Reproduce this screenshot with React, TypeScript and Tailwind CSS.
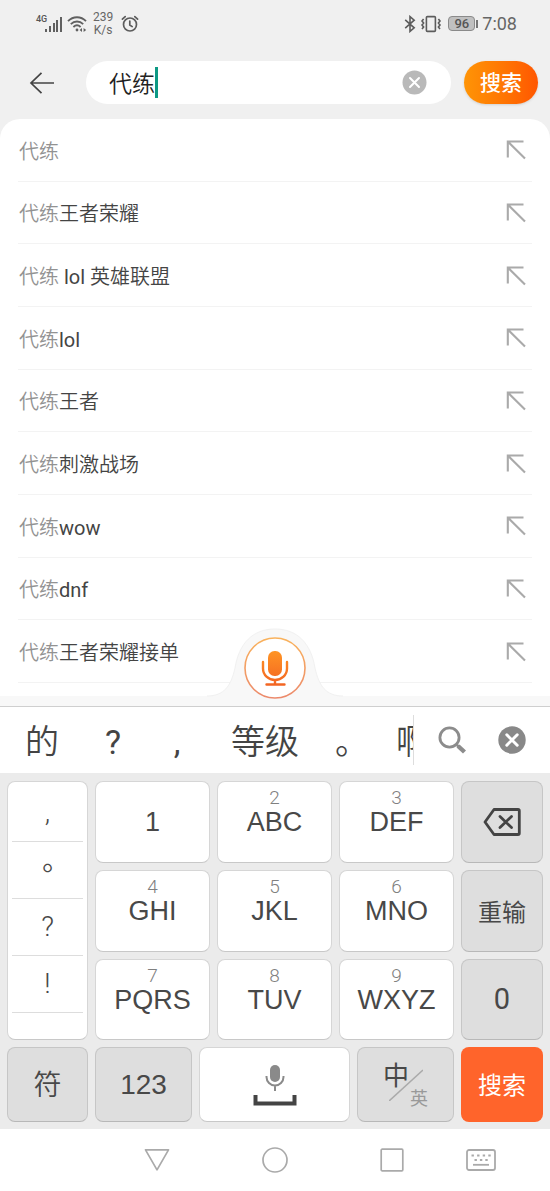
import { useState } from "react";
import clsx from "clsx";

const KEYWORD = "代练";

const suggestions = [
  "",
  "王者荣耀",
  " lol 英雄联盟",
  "lol",
  "王者",
  "刺激战场",
  "wow",
  "dnf",
  "王者荣耀接单",
];

const candidates = [
  { text: "的", style: "w-[84px]" },
  { text: "?", style: "w-[58px] font-normal" },
  { text: ",", style: "w-[70px] font-normal" },
  { text: "等级", style: "w-[106px]" },
  { text: "。", style: "w-[68px]" },
  { text: "啊", style: "w-[54px]" },
];

const letterRows = [
  [
    { digit: "", label: "1" },
    { digit: "2", label: "ABC" },
    { digit: "3", label: "DEF" },
  ],
  [
    { digit: "4", label: "GHI" },
    { digit: "5", label: "JKL" },
    { digit: "6", label: "MNO" },
  ],
  [
    { digit: "7", label: "PQRS" },
    { digit: "8", label: "TUV" },
    { digit: "9", label: "WXYZ" },
  ],
];

const punctuation = [",", "。", "?", "!"];

const keyBase = "rounded-lg border flex items-center justify-center";
const whiteKey = "bg-white border-[#d6d6d6] border-b-[#c8c8c8]";
const grayKey = "bg-[#dedede] border-[#c6c6c6] border-b-[#b8b8b8]";

const StatusBar = () => {
  return (
    <div className="h-[47px] pl-[34px] pr-[33px] flex items-center justify-between text-[#666]">
      <div className="flex items-center">
        <svg width="28" height="20" viewBox="0 0 28 20" className="ml-px">
          <text
            x="1"
            y="8"
            fontSize="9"
            fontWeight="500"
            fill="#555"
            fontFamily="Roboto, sans-serif"
          >
            4G
          </text>
          <g fill="#606060">
            <rect x="10" y="15" width="2" height="3" />
            <rect x="14" y="12" width="2" height="6" />
            <rect x="18" y="9" width="2" height="9" />
            <rect x="21" y="6" width="2" height="12" />
            <rect x="25" y="3" width="2" height="15" />
          </g>
        </svg>
        <svg
          width="20"
          height="18"
          viewBox="0 0 20 18"
          fill="none"
          stroke="#606060"
          strokeWidth="1.8"
          className="ml-1"
        >
          <path d="M1 6.2C6 .9 14 .9 19 6.2" />
          <path d="M3.8 9.2C7.4 5.6 12.6 5.6 16.2 9.2" />
          <path d="M6.4 12C8.6 9.9 11.4 9.9 13.6 12" />
          <circle cx="10" cy="15" r="1.4" fill="#606060" stroke="none" />
          <path d="M12.6 15L15 13v4zM19.2 15L16.6 13v4z" fill="#606060" stroke="none" />
        </svg>
        <div className="ml-1.5 w-5 text-center text-xs leading-[13px]">
          239
          <br />
          K/s
        </div>
        <svg
          width="18"
          height="18"
          viewBox="0 0 18 18"
          fill="none"
          stroke="#5c5c5c"
          strokeWidth="1.7"
          strokeLinecap="round"
          className="ml-2"
        >
          <circle cx="9" cy="9.5" r="6.5" />
          <path d="M8.8 6v4l2.4 1.6M1.4 4.2L4.2 1.6M16.6 4.2L13.8 1.6" />
        </svg>
      </div>
      <div className="flex items-center">
        <svg
          width="12"
          height="18"
          viewBox="0 0 12 18"
          fill="none"
          stroke="#5c5c5c"
          strokeWidth="1.6"
        >
          <path d="M1.2 4.8l9 8-4.2 3.6V1.6l4.2 3.6-9 8" />
        </svg>
        <svg
          width="22"
          height="18"
          viewBox="0 0 22 18"
          fill="none"
          stroke="#5c5c5c"
          strokeWidth="1.6"
          className="ml-1"
        >
          <rect x="6.4" y="1.6" width="9" height="14.8" rx="1" />
          <path d="M3.6 4l-1.6 2 1.6 2-1.6 2 1.6 2-1.6 2M18.4 4l1.6 2-1.6 2 1.6 2-1.6 2 1.6 2" />
        </svg>
        <div className="ml-1.5 w-[27px] h-[15px] rounded-sm border border-[#8a8a8a] bg-[#c0c0c0] text-[#555] text-[13px] leading-[13px] text-center font-medium">
          96
        </div>
        <div className="w-0.5 h-2 bg-[#777] ml-px" />
        <span className="ml-1 text-lg">7:08</span>
      </div>
    </div>
  );
};

const SearchHeader = () => {
  const [keyword, setKeyword] = useState(KEYWORD);

  return (
    <form
      className="h-[72px] pt-[14px] pl-[29px] pr-3 flex items-start"
      onSubmit={(e) => e.preventDefault()}
    >
      <button type="button" aria-label="返回" className="h-[43px]">
        <svg
          width="26"
          height="24"
          viewBox="0 0 26 24"
          fill="none"
          stroke="#444"
          strokeWidth="1.7"
        >
          <path d="M25 12H2M12.5 1.8L2 12l10.5 10.2" />
        </svg>
      </button>
      <label className="ml-[31px] flex-1 h-[43px] rounded-full bg-white flex items-center pl-[23px] pr-6">
        <input
          aria-label="搜索"
          value={keyword}
          onChange={(e) => setKeyword(e.target.value)}
          className="field-sizing-content pt-1 outline-none text-[23px] leading-8 font-[350] text-[#222] caret-[#0d9984]"
        />
        <span className="w-[3px] h-[31px] bg-[#0d9984]" />
        <button
          type="button"
          aria-label="清除"
          className="ml-auto"
          onClick={() => setKeyword("")}
        >
          <svg width="25" height="25" viewBox="0 0 25 25">
            <circle cx="12.5" cy="12.5" r="12" fill="#b9b9b9" />
            <path
              d="M8 8l9 9M17 8l-9 9"
              stroke="#fff"
              strokeWidth="2"
              strokeLinecap="round"
            />
          </svg>
        </button>
      </label>
      <button
        type="submit"
        className="ml-[13px] w-[74px] h-[43px] pt-[3px] rounded-full bg-linear-to-r from-[#ff9406] to-[#ff5600] text-white text-[21px] font-medium shadow-sm"
      >
        搜索
      </button>
    </form>
  );
};

const SuggestionList = () => {
  return (
    <ul className="grid auto-rows-fr h-[564px] px-[18px]">
      {suggestions.map((rest) => (
        <li key={rest} className="border-b border-[#f3f3f3]">
          <button className="w-full h-full flex items-center justify-between text-left text-xl whitespace-pre pt-px pr-1.5 pl-px">
            <span className="pt-[3px] text-[#444] font-[350]">
              <span className="text-[#929292]">{KEYWORD}</span>
              {/* latin words need a heavier weight to match the hanzi */}
              {rest.split(/([a-z]+)/).map((part, index) => (
                <span key={index} className={clsx(index % 2 && "font-normal")}>
                  {part}
                </span>
              ))}
            </span>
            <svg
              width="20"
              height="20"
              viewBox="0 0 20 20"
              fill="none"
              stroke="#aaa"
              strokeWidth="2.1"
            >
              <path d="M17.5 1.5H1.8V17.5M1.8 1.5L19 18.6" />
            </svg>
          </button>
        </li>
      ))}
    </ul>
  );
};

const VoiceBar = () => {
  return (
    <div className="relative h-[11px] bg-[#f8f8f8] border-b border-[#cfcfcf]">
      <button
        aria-label="语音搜索"
        className="absolute bottom-0 left-1/2 -translate-x-1/2"
      >
        <svg width="160" height="78" viewBox="0 0 160 78" fill="none">
          <defs>
            <linearGradient id="ring" x1="0" y1="0" x2="0" y2="1">
              <stop offset="0" stopColor="#f9b25c" />
              <stop offset="1" stopColor="#ec8a6c" />
            </linearGradient>
            <linearGradient
              id="mic"
              gradientUnits="userSpaceOnUse"
              x1="80"
              y1="23"
              x2="80"
              y2="58"
            >
              <stop offset="0" stopColor="#ff9424" />
              <stop offset="1" stopColor="#f26322" />
            </linearGradient>
          </defs>
          <path
            d="M0 68H12C29 68 36 58 40 40C44 15 58 1 80 1S116 15 120 40C124 58 131 68 148 68H160V78H0Z"
            fill="#f8f8f8"
          />
          <path
            d="M12 68C29 68 36 58 40 40C44 15 58 1 80 1S116 15 120 40C124 58 131 68 148 68"
            stroke="#f1f1f1"
          />
          <circle
            cx="80"
            cy="40"
            r="30"
            fill="#fff"
            stroke="url(#ring)"
            strokeWidth="1.6"
          />
          <rect x="73" y="23" width="14" height="25" rx="6.5" fill="url(#mic)" />
          <path
            d="M68 34v6.5a12 11.5 0 0 0 24 0V34M80 52v4M71.5 56.5h18"
            stroke="url(#mic)"
            strokeWidth="2.4"
            strokeLinecap="round"
          />
        </svg>
      </button>
    </div>
  );
};

const CandidateBar = () => {
  return (
    <div className="h-[66px] bg-white flex items-center">
      <div className="flex-1 min-w-0 overflow-hidden flex border-r border-[#ddd] h-[50px] text-[#444] text-[34px] font-[350]">
        {candidates.map(({ text, style }) => (
          <button
            key={text}
            className={clsx("shrink-0 leading-[54px] whitespace-nowrap", style)}
          >
            {text}
          </button>
        ))}
      </div>
      <button aria-label="查找" className="w-[76px] flex justify-center">
        <svg width="28" height="28" viewBox="0 0 28 28" fill="none" stroke="#8c8c8c">
          <circle cx="11.5" cy="11.5" r="9.6" strokeWidth="2.8" />
          <path d="M18 18l2.5 2.5" strokeWidth="2.5" />
          <path d="M20 20l6.5 6" strokeWidth="4.4" />
        </svg>
      </button>
      <button aria-label="关闭" className="w-[60px] pl-2">
        <svg width="28" height="28" viewBox="0 0 28 28">
          <circle cx="14" cy="14" r="13.7" fill="#888" />
          <path
            d="M8.8 8.8l10.4 10.4M19.2 8.8l-10.4 10.4"
            stroke="#fff"
            strokeWidth="3"
            strokeLinecap="round"
          />
        </svg>
      </button>
    </div>
  );
};

const LetterKey = ({ digit, label }: { digit: string; label: string }) => {
  return (
    <button className={clsx(keyBase, whiteKey, "flex-col text-[#484848]")}>
      <span className="h-4 text-[19px] leading-4 font-light text-[#808080]">
        {digit}
      </span>
      <span className="mb-4 h-8 text-[27px] leading-8 font-[Liberation_Sans,sans-serif]">
        {label}
      </span>
    </button>
  );
};

const Keyboard = () => {
  return (
    <div className="bg-[#ebebeb] px-[7px] pt-2 pb-[7px] grid grid-cols-[81fr_115fr_115fr_115fr_82fr] grid-rows-[82px_82px_81px_75px] gap-[7px] text-[#484848]">
      <div
        lang="zh-TW"
        className={clsx(
          "row-span-3 rounded-lg border px-1 pt-[3px] flex flex-col font-[Roboto,Noto_Sans_CJK_TC,sans-serif]",
          whiteKey
        )}
      >
        {punctuation.map((mark) => (
          <button
            key={mark}
            className="h-[57px] border-b border-[#ddd] text-[28px] leading-[56px] font-[350]"
          >
            {mark}
          </button>
        ))}
      </div>
      {letterRows[0].map((key) => (
        <LetterKey key={key.label} {...key} />
      ))}
      <button aria-label="删除" className={clsx(keyBase, grayKey)}>
        <svg
          width="38"
          height="28"
          viewBox="0 0 38 28"
          fill="none"
          stroke="#444"
          strokeWidth="2.8"
          strokeLinejoin="round"
          strokeLinecap="round"
        >
          <path d="M11 1.5H35a1.3 1.3 0 0 1 1.3 1.3V25.2a1.3 1.3 0 0 1-1.3 1.3H11L2 14z" />
          <path d="M17 8.5l11.5 11M28.5 8.5L17 19.5" />
        </svg>
      </button>
      {letterRows[1].map((key) => (
        <LetterKey key={key.label} {...key} />
      ))}
      <button className={clsx(keyBase, grayKey, "pt-[3px] text-2xl")}>
        重输
      </button>
      {letterRows[2].map((key) => (
        <LetterKey key={key.label} {...key} />
      ))}
      <button className={clsx(keyBase, grayKey, "text-[29px]")}>0</button>

      <button
        className={clsx(keyBase, grayKey, "pt-[3px] text-[28px] font-[350]")}
      >
        符
      </button>
      <div className="col-span-3 grid grid-cols-[97fr_151fr_97fr] gap-[7px]">
        <button
          className={clsx(
            keyBase,
            grayKey,
            "text-[28px] font-[Liberation_Sans,sans-serif]"
          )}
        >
          123
        </button>
        <button aria-label="空格" className={clsx(keyBase, whiteKey)}>
          <svg width="44" height="44" viewBox="0 0 44 44" fill="none">
            <rect x="17" y="2" width="10" height="17" rx="5" fill="#8a8a8a" />
            <path
              d="M13.5 13v1a8.5 8.5 0 0 0 17 0v-1M22 23v5"
              stroke="#8a8a8a"
              strokeWidth="2"
            />
            <path d="M2.5 32v8.5h39V32" stroke="#444" strokeWidth="4" />
          </svg>
        </button>
        <button
          aria-label="中英切换"
          className={clsx(keyBase, grayKey, "relative")}
        >
          <svg width="34" height="32" viewBox="0 0 34 32" stroke="#aaa">
            <path d="M0 32L34 1" strokeWidth="1.6" />
          </svg>
          <span className="absolute left-[25px] top-3 text-[26px] leading-8">
            中
          </span>
          <span className="absolute right-[25px] bottom-3 text-lg leading-5 text-[#999]">
            英
          </span>
        </button>
      </div>
      <button className="pt-[3px] rounded-lg bg-[#ff642b] text-white text-2xl">
        搜索
      </button>
    </div>
  );
};

const NavBar = () => {
  return (
    <nav className="h-[62px] bg-white grid grid-cols-[98fr_118fr_118fr_116fr_62fr_38fr] items-center *:flex *:justify-center">
      <button aria-label="返回上一页" className="col-start-2">
        <svg width="26" height="24" viewBox="0 0 26 24" fill="none" stroke="#aaa">
          <path
            d="M1.5 1.8H24.5L13 21.8z"
            strokeWidth="1.7"
            strokeLinejoin="round"
          />
        </svg>
      </button>
      <button aria-label="主屏幕">
        <svg width="26" height="26" viewBox="0 0 26 26" fill="none" stroke="#aaa">
          <circle cx="13" cy="13" r="12" strokeWidth="1.7" />
        </svg>
      </button>
      <button aria-label="最近任务">
        <svg width="24" height="24" viewBox="0 0 24 24" fill="none" stroke="#aaa">
          <rect x="1.2" y="1.2" width="21.6" height="21.6" rx="1" strokeWidth="1.7" />
        </svg>
      </button>
      <button aria-label="切换键盘">
        <svg width="30" height="22" viewBox="0 0 30 22" fill="none" stroke="#aaa">
          <rect x="1" y="1" width="28" height="20" rx="2" strokeWidth="1.8" />
          <path
            d="M5.5 6.5h19.5"
            strokeWidth="2.2"
            strokeDasharray="2.4 3.2"
          />
          <path d="M8.5 11h13.5" strokeWidth="2.2" strokeDasharray="2.4 3" />
          <path d="M7 15.8h16" strokeWidth="1.8" />
        </svg>
      </button>
    </nav>
  );
};

const App = () => {
  return (
    <div
      lang="zh-CN"
      className="w-full bg-[#f0f0f0] font-[Roboto,Noto_Sans_CJK_SC,sans-serif]"
    >
      <StatusBar />
      <SearchHeader />
      <main className="bg-white rounded-t-[20px] pb-[13px]">
        <SuggestionList />
      </main>
      <VoiceBar />
      <CandidateBar />
      <Keyboard />
      <NavBar />
    </div>
  );
};

export default App;
